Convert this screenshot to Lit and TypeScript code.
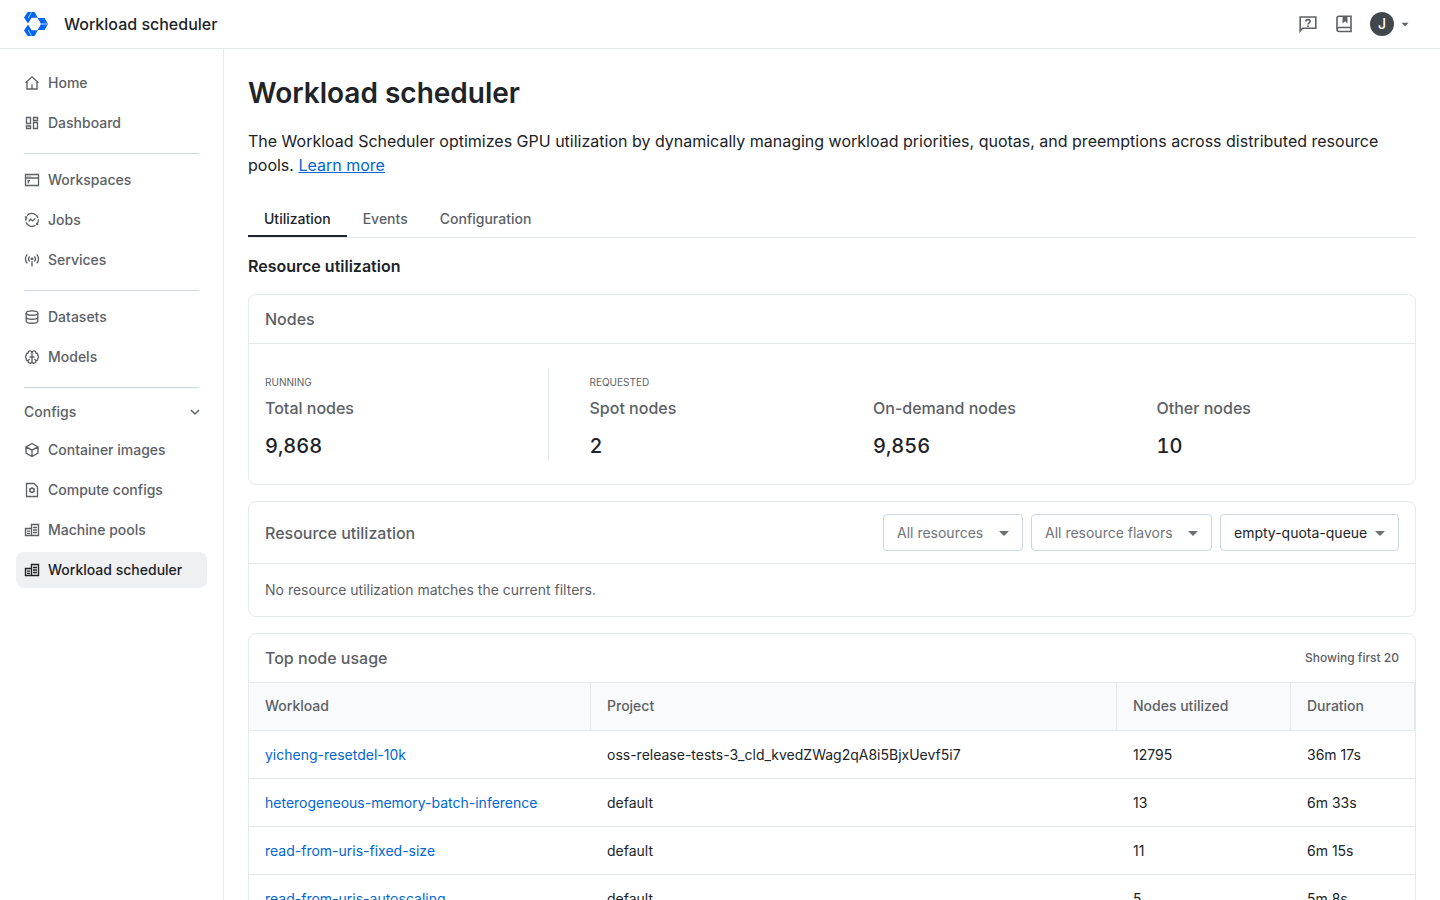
import { LitElement, html, css, svg, TemplateResult } from "lit";
import { customElement, property, state } from "lit/decorators.js";
import { classMap } from "lit/directives/class-map.js";

const machinePool = svg`
  <path d="M1.5 6.5H7.5V13.5H1.5ZM7.5 2.5H14.5V13.5H7.5Z" stroke-width="1.4"/>
  <path d="M3 9.2H6M3 11.4H6M9 5.5H13M9 8H13M9 10.5H13" stroke-width="1.3"/>`;

const icons: Record<string, TemplateResult | ReturnType<typeof svg>> = {
  home: svg`<path d="M1.5 7.8L8 1.8L14.5 7.8M3 6.6V14H13V6.6M8 14V9.6"/>`,
  dashboard: svg`<path d="M2.5 2.5H6.5V8.5H2.5ZM9.5 2.5H13.5V5.5H9.5ZM9.5 7.5H13.5V13.5H9.5ZM2.5 11H6.5V13.5H2.5Z"/>`,
  workspaces: svg`<path d="M1.5 2.5H14.5V13.5H1.5ZM1.5 6H14.5"/><path d="M3.3 4.3H4.4M5.7 4.3H6.8" stroke-width="1.1"/><path d="M4.4 8.2V11.6M3.4 8.6H6"/>`,
  jobs: svg`<path d="M3.1 3.6A6.3 6.3 0 0 1 13.9 6M14.3 7.4A6.3 6.3 0 0 1 13 12M11.6 13.2A6.3 6.3 0 0 1 2.1 10.4M1.7 8.6A6.3 6.3 0 0 1 2.4 5.2"/><path d="M.8 4.9L2.4 5L2.8 6.6M12.6 10.8L12.8 12.5L14.4 12.4"/><path d="M4.6 9.4L6.7 7.2L8.8 8.9L11.4 6.3"/>`,
  services: svg`<circle cx="8" cy="6.9" r="1.4" fill="currentColor" stroke="none"/><path d="M8 9.3V14.5M5.7 9.4A3.4 3.4 0 0 1 5.7 4.4M10.3 9.4A3.4 3.4 0 0 0 10.3 4.4M3.3 11.4A6.4 6.4 0 0 1 3.3 2.4M12.7 11.4A6.4 6.4 0 0 0 12.7 2.4"/>`,
  datasets: svg`<ellipse cx="8" cy="4" rx="5.8" ry="2.2"/><path d="M2.2 4V12C2.2 13.3 4.9 14.2 8 14.2S13.8 13.3 13.8 12V4M2.2 8C2.2 9.3 4.9 10.2 8 10.2S13.8 9.3 13.8 8"/>`,
  models: svg`<path d="M8 3.4V12.8C7.6 14 6.6 14.4 5.6 14.1C4.5 13.8 4 13 4.1 12C2.6 11.8 2 10.7 2.4 9.7C1.2 8.8 1.2 7.2 2.4 6.3C2 5.1 2.7 4.1 4.1 4C4 2.9 4.6 2.1 5.6 1.9C6.8 1.7 7.6 2.3 8 3.4ZM8 3.4C8.4 2.3 9.2 1.7 10.4 1.9C11.4 2.1 12 2.9 11.9 4C13.3 4.1 14 5.1 13.6 6.3C14.8 7.2 14.8 8.8 13.6 9.7C14 10.7 13.4 11.8 11.9 12C12 13 11.5 13.8 10.4 14.1C9.4 14.4 8.4 14 8 12.8"/><path d="M5.4 8H10.6M4.1 12C4.2 10.9 5 10.4 5.8 10.4M11.9 12C11.8 10.9 11 10.4 10.2 10.4"/>`,
  container: svg`<path d="M8 1.5L14 4.8V11.2L8 14.5L2 11.2V4.8ZM2 4.8L8 8.2L14 4.8M8 8.2V14.5"/>`,
  compute: svg`<path d="M2.5 1.5H10L13.5 5V14.5H2.5Z"/><circle cx="8" cy="8.2" r="2"/><path d="M8 5.2V6.2M8 10.2V11.2M5.4 6.7L6.3 7.2M9.7 9.2L10.6 9.7M5.4 9.7L6.3 9.2M9.7 7.2L10.6 6.7"/>`,
  machine: machinePool,
  scheduler: machinePool,
};

interface NavItem {
  id: string;
  label: string;
}

const navGroups: NavItem[][] = [
  [
    { id: "home", label: "Home" },
    { id: "dashboard", label: "Dashboard" },
  ],
  [
    { id: "workspaces", label: "Workspaces" },
    { id: "jobs", label: "Jobs" },
    { id: "services", label: "Services" },
  ],
  [
    { id: "datasets", label: "Datasets" },
    { id: "models", label: "Models" },
  ],
];

const configItems: NavItem[] = [
  { id: "container", label: "Container images" },
  { id: "compute", label: "Compute configs" },
  { id: "machine", label: "Machine pools" },
  { id: "scheduler", label: "Workload scheduler" },
];

const stats = [
  { group: "Running", label: "Total nodes", value: "9,868" },
  { group: "Requested", label: "Spot nodes", value: "2" },
  { group: "", label: "On-demand nodes", value: "9,856" },
  { group: "", label: "Other nodes", value: "10" },
];

const workloads = [
  { name: "yicheng-resetdel-10k", project: "oss-release-tests-3_cld_kvedZWag2qA8i5BjxUevf5i7", nodes: 12795, duration: "36m 17s" },
  { name: "heterogeneous-memory-batch-inference", project: "default", nodes: 13, duration: "6m 33s" },
  { name: "read-from-uris-fixed-size", project: "default", nodes: 11, duration: "6m 15s" },
  { name: "read-from-uris-autoscaling", project: "default", nodes: 5, duration: "5m 8s" },
];

const base = css`
  :host {
    display: block;
    box-sizing: border-box;
    --ink: #202327;
    --muted: #5c6166;
    --line: #e4e9ee;
    --rule: #cbd7e3;
    --link: #0066d6;
  }
  *,
  *::before {
    box-sizing: border-box;
  }
  button {
    font: inherit;
    color: inherit;
    background: none;
    border: 0;
    padding: 0;
    cursor: pointer;
  }
`;

@customElement("top-bar")
export class TopBar extends LitElement {
  static styles = [
    base,
    css`
      .bar {
        display: flex;
        align-items: center;
        justify-content: space-between;
        height: 49px;
        padding: 0 24px;
        border-bottom: 1px solid var(--line);
      }
      .brand {
        display: flex;
        align-items: center;
        gap: 16px;
        color: var(--ink);
        font-size: 16px;
        line-height: 24px;
        font-weight: 500;
        text-decoration: none;
      }
      .actions {
        display: flex;
        align-items: center;
        gap: 16px;
        padding-right: 4px;
        color: var(--muted);
      }
      .actions svg,
      .brand svg {
        display: block;
      }
      .account {
        display: flex;
        align-items: center;
        gap: 4px;
      }
      .avatar {
        width: 24px;
        height: 24px;
        border-radius: 50%;
        background: #42474b;
        color: #fff;
        font-size: 14px;
        line-height: 24px;
        font-weight: 500;
        text-align: center;
      }
    `,
  ];

  render() {
    return html`
      <header class="bar">
        <a class="brand" href="#">
          <svg width="24" height="24" viewBox="0 0 24 24" aria-hidden="true">
            <g fill="#0066ff">
              <path d="M3.6 0H10.6L13.8 5.8H7.6L4 11.6L0 5.6Z" />
              <path d="M3.6 24H10.6L13.8 18.2H7.6L4 12.4L0 18.4Z" />
              <path d="M13.8 6H20.6L24 12L20.6 18H13.8L17 12Z" />
            </g>
            <path d="M7.4 .4L4.4 5.8M7.4 23.6L4.4 18.2M17 12H23.6" stroke="#cfe1ff" stroke-width="0.9" fill="none" />
          </svg>
          Workload scheduler
        </a>
        <div class="actions">
          <button aria-label="Help">
            <svg width="20" height="20" viewBox="0 0 20 20" fill="none" stroke="currentColor" stroke-width="1.6">
              <path d="M2.2 17V3H17.8V14.3H4.6Z" />
              <path d="M7.8 7.4C7.8 6.2 8.7 5.6 9.9 5.6C11.2 5.6 12.1 6.3 12.1 7.4C12.1 8.8 10 8.8 10 10.4M10 11.3V12.9" />
            </svg>
          </button>
          <button aria-label="Documentation">
            <svg width="20" height="20" viewBox="0 0 20 20" fill="none" stroke="currentColor" stroke-width="1.6">
              <path d="M17 13.5V2.3H5C3.8 2.3 3 3.1 3 4.3V15.5C3 16.7 3.8 17.5 5 17.5H17V13.5H5C3.8 13.5 3 14.4 3 15.5" />
              <path d="M8.5 2.3H13.5V9.5L11 7.3L8.5 9.5Z" fill="currentColor" stroke="none" />
            </svg>
          </button>
          <button class="account" aria-label="Account">
            <span class="avatar">J</span>
            <svg width="14" height="8" viewBox="0 0 14 8" aria-hidden="true"><path d="M3.5 2.8H10.5L7 6.3Z" fill="currentColor" /></svg>
          </button>
        </div>
      </header>
    `;
  }
}

@customElement("side-nav")
export class SideNav extends LitElement {
  @property() active = "";
  @state() private open = true;

  static styles = [
    base,
    css`
      :host {
        flex: none;
        width: 224px;
        border-right: 1px solid var(--line);
        overflow: hidden auto;
      }
      nav {
        display: flex;
        flex-direction: column;
        gap: 4px;
        padding: 16px;
        color: var(--muted);
        font-size: 14px;
        line-height: 20px;
        font-weight: 500;
      }
      .item {
        display: flex;
        align-items: center;
        gap: 8px;
        padding: 8px;
        border-radius: 8px;
        color: inherit;
        text-decoration: none;
      }
      .item.active {
        background: #eff0f2;
        color: var(--ink);
      }
      .rule {
        align-self: stretch;
        height: 1px;
        margin: 8px 8px 4px;
        border: 0;
        background: var(--rule);
      }
      .section {
        display: flex;
        align-items: center;
        justify-content: space-between;
        height: 32px;
        padding: 0 4px 0 8px;
      }
    `,
  ];

  private item({ id, label }: NavItem) {
    return html`
      <a href="#${id}" class=${classMap({ item: true, active: id === this.active })}>
        <svg width="16" height="16" viewBox="0 0 16 16" fill="none" stroke="currentColor" stroke-width="1.35" aria-hidden="true">
          ${icons[id]}
        </svg>
        ${label}
      </a>
    `;
  }

  render() {
    return html`
      <nav>
        ${navGroups.map((group) => html`${group.map((i) => this.item(i))}<hr class="rule" />`)}
        <button class="section" aria-expanded=${this.open} @click=${() => (this.open = !this.open)}>
          Configs
          <svg width="16" height="16" viewBox="0 0 16 16" fill="none" stroke="currentColor" stroke-width="1.5" aria-hidden="true">
            <path d="M4 6L8 10L12 6" />
          </svg>
        </button>
        ${this.open ? configItems.map((i) => this.item(i)) : null}
      </nav>
    `;
  }
}

@customElement("filter-select")
export class FilterSelect extends LitElement {
  @property() label = "";
  @property() value = "";
  @property({ type: Boolean }) placeholder = false;

  static styles = [
    base,
    css`
      .box {
        position: relative;
        display: flex;
      }
      select {
        appearance: none;
        height: 37px;
        padding: 0 30px 0 13px;
        border: 1px solid var(--rule);
        border-radius: 4px;
        background: #fff;
        color: var(--ink);
        font: inherit;
        font-size: 14px;
      }
      .placeholder {
        padding-right: 38px;
        color: #70757a;
      }
      svg {
        position: absolute;
        top: 17px;
        right: 14px;
        pointer-events: none;
      }
    `,
  ];

  render() {
    return html`
      <div class="box">
        <select aria-label=${this.label} class=${classMap({ placeholder: this.placeholder })}>
          <option>${this.value}</option>
        </select>
        <svg width="10" height="5" viewBox="0 0 10 5" aria-hidden="true"><path d="M0 0H10L5 5Z" fill="#6b6f73" /></svg>
      </div>
    `;
  }
}

@customElement("app-root")
export class AppRoot extends LitElement {
  @state() private tab = "Utilization";

  static styles = [
    base,
    css`
      :host {
        display: flex;
        flex-direction: column;
        height: 100vh;
        background: #fff;
        color: var(--ink);
        font-family: Inter, "Liberation Sans", sans-serif;
        font-size: 14px;
        line-height: 20px;
      }
      .shell {
        display: flex;
        flex: 1;
        min-height: 0;
      }
      main {
        flex: 1;
        min-width: 0;
        padding: 24px;
        overflow: hidden auto;
        scrollbar-width: none;
      }
      h1,
      h2,
      h3,
      p,
      dl,
      dd {
        margin: 0;
      }
      h1 {
        font-size: 28px;
        line-height: 40px;
        font-weight: 600;
      }
      .intro {
        margin: 16px 0 24px;
        font-size: 16px;
        line-height: 24px;
      }
      a {
        color: var(--link);
      }
      .tabs {
        display: flex;
        border-bottom: 1px solid var(--line);
      }
      .tab {
        height: 36px;
        padding: 2px 16px 0;
        border-bottom: 2px solid transparent;
        color: var(--muted);
        font-weight: 500;
      }
      .tab.selected {
        border-color: var(--ink);
        color: var(--ink);
      }
      h2 {
        margin: 16px 0;
        font-size: 16px;
        line-height: 24px;
        font-weight: 600;
      }
      .card {
        margin-bottom: 16px;
        border: 1px solid var(--line);
        border-radius: 8px;
        overflow: hidden;
      }
      .card-head {
        display: flex;
        align-items: center;
        justify-content: space-between;
        padding: 12px 16px;
        border-bottom: 1px solid var(--line);
        color: var(--muted);
      }
      h3 {
        font-size: 16px;
        line-height: 24px;
        font-weight: 500;
      }
      .filters {
        display: flex;
        gap: 8px;
      }
      .note {
        font-size: 12px;
        font-weight: 500;
      }
      .empty {
        padding: 16px;
        color: var(--muted);
      }
      .stats {
        display: grid;
        grid-template-columns: repeat(4, 1fr);
        padding: 24px 16px;
      }
      .stat {
        padding-left: 41px;
      }
      .stat:first-child {
        padding-left: 0;
        border-right: 1px solid var(--line);
      }
      .group {
        height: 28px;
        font-size: 10px;
        line-height: 28px;
        color: var(--muted);
        text-transform: uppercase;
      }
      .stat dt {
        font-size: 16px;
        line-height: 24px;
        font-weight: 500;
        color: var(--muted);
      }
      .stat dd {
        padding-top: 12px;
        font-size: 20px;
        line-height: 28px;
        font-weight: 500;
        font-variant-numeric: tabular-nums;
      }
      table {
        width: 100%;
        table-layout: fixed;
        border-collapse: separate;
        border-spacing: 0;
      }
      th,
      td {
        height: 48px;
        padding: 0 16px;
        border-bottom: 1px solid var(--line);
        text-align: left;
      }
      th {
        padding-bottom: 1px;
        border-right: 1px solid var(--line);
        background: #f8fafc;
        color: var(--muted);
        font-weight: 500;
      }
      td a {
        text-decoration: none;
      }
      .c-workload {
        width: 342px;
      }
      .c-nodes {
        width: 174px;
      }
      .c-duration {
        width: 124px;
      }
    `,
  ];

  render() {
    return html`
      <top-bar></top-bar>
      <div class="shell">
        <side-nav active="scheduler"></side-nav>
        <main>
          <h1>Workload scheduler</h1>
          <p class="intro">
            The Workload Scheduler optimizes GPU utilization by dynamically managing workload priorities, quotas, and
            preemptions across distributed resource pools. <a href="#learn">Learn more</a>
          </p>
          <div class="tabs" role="tablist">
            ${["Utilization", "Events", "Configuration"].map(
              (name) => html`<button
                role="tab"
                class=${classMap({ tab: true, selected: name === this.tab })}
                aria-selected=${name === this.tab}
                @click=${() => (this.tab = name)}
              >${name}</button>`
            )}
          </div>
          <h2>Resource utilization</h2>

          <section class="card">
            <div class="card-head"><h3>Nodes</h3></div>
            <div class="stats">
              ${stats.map(
                (s) => html`<div class="stat">
                  <div class="group">${s.group}</div>
                  <dl><dt>${s.label}</dt><dd>${s.value}</dd></dl>
                </div>`
              )}
            </div>
          </section>

          <section class="card">
            <div class="card-head">
              <h3>Resource utilization</h3>
              <div class="filters">
                <filter-select label="Resource" value="All resources" placeholder></filter-select>
                <filter-select label="Resource flavor" value="All resource flavors" placeholder></filter-select>
                <filter-select label="Queue" value="empty-quota-queue"></filter-select>
              </div>
            </div>
            <p class="empty">No resource utilization matches the current filters.</p>
          </section>

          <section class="card">
            <div class="card-head">
              <h3>Top node usage</h3>
              <span class="note">Showing first 20</span>
            </div>
            <table>
              <thead>
                <tr>
                  <th scope="col" class="c-workload">Workload</th>
                  <th scope="col">Project</th>
                  <th scope="col" class="c-nodes">Nodes utilized</th>
                  <th scope="col" class="c-duration">Duration</th>
                </tr>
              </thead>
              <tbody>
                ${workloads.map(
                  (w) => html`<tr>
                    <td><a href="#${w.name}">${w.name}</a></td>
                    <td>${w.project}</td>
                    <td>${w.nodes}</td>
                    <td>${w.duration}</td>
                  </tr>`
                )}
              </tbody>
            </table>
          </section>
        </main>
      </div>
    `;
  }
}
